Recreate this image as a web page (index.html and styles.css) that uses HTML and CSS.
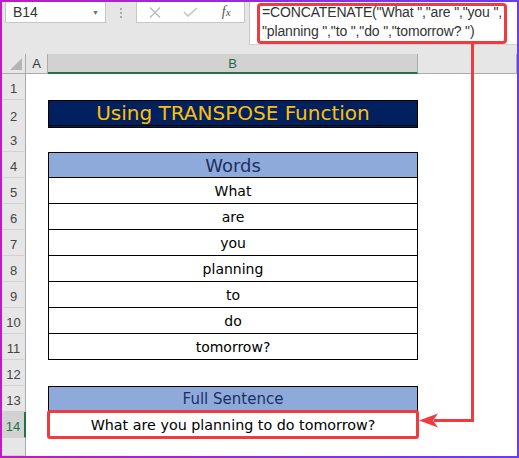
FILE: index.html
```html
<!DOCTYPE html>
<html lang="en">
<head>
    <meta charset="UTF-8">
    <meta name="viewport" content="width=device-width, initial-scale=1.0">
    <title>Using TRANSPOSE Function</title>
    <link rel="stylesheet" href="styles.css">
</head>
<body>
    <div class="frame">
        <!-- name box + formula bar -->
        <div class="toolbar">
            <div class="name-box">
                <span class="cell-ref">B14</span>
                <span class="drop">&#9660;</span>
            </div>
            <div class="grip"><i></i><i></i><i></i></div>
            <div class="fx-buttons">
                <span class="fx-btn">
                    <svg width="12" height="11" viewBox="0 0 12 11"><path d="M1 0.5 L11 10.5 M11 0.5 L1 10.5" stroke="#b9b9b9" stroke-width="1.3" fill="none"/></svg>
                </span>
                <span class="fx-btn">
                    <svg width="15" height="10" viewBox="0 0 15 10"><path d="M1 5 L5 9 L14 1" stroke="#c4c4c4" stroke-width="1.6" fill="none"/></svg>
                </span>
                <span class="fx-btn fx-label">f<sub>x</sub></span>
            </div>
            <div class="formula-bar">
                <div class="formula-box">
                    <div class="formula-text">=CONCATENATE("What ","are ","you ",<br>"planning ","to ","do ","tomorrow? ")</div>
                </div>
            </div>
        </div>

        <!-- sheet grid -->
        <div class="sheet">
            <div class="row col-heads">
                <div class="corner"></div>
                <div class="ch">A</div>
                <div class="ch selected">B</div>
                <div class="ch"></div>
            </div>
            <div class="row"><div class="rh">1</div><div></div><div class="c"></div><div></div></div>
            <div class="row"><div class="rh">2</div><div></div><div class="c title">Using TRANSPOSE Function</div><div></div></div>
            <div class="row"><div class="rh">3</div><div></div><div class="c"></div><div></div></div>
            <div class="row"><div class="rh">4</div><div></div><div class="c head">Words</div><div></div></div>
            <div class="row"><div class="rh">5</div><div></div><div class="c word">What</div><div></div></div>
            <div class="row"><div class="rh">6</div><div></div><div class="c word">are</div><div></div></div>
            <div class="row"><div class="rh">7</div><div></div><div class="c word">you</div><div></div></div>
            <div class="row"><div class="rh">8</div><div></div><div class="c word">planning</div><div></div></div>
            <div class="row"><div class="rh">9</div><div></div><div class="c word">to</div><div></div></div>
            <div class="row"><div class="rh">10</div><div></div><div class="c word">do</div><div></div></div>
            <div class="row"><div class="rh">11</div><div></div><div class="c word">tomorrow?</div><div></div></div>
            <div class="row"><div class="rh">12</div><div></div><div class="c"></div><div></div></div>
            <div class="row"><div class="rh">13</div><div></div><div class="c head sub">Full Sentence</div><div></div></div>
            <div class="row"><div class="rh selected">14</div><div></div><div class="c word sentence">What are you planning to do tomorrow?</div><div></div></div>
            <div class="row last"><div class="rh"></div><div></div><div class="c"></div><div></div></div>
        </div>

        <!-- callout from formula to result -->
        <svg class="connector" width="519" height="458" viewBox="0 0 519 458">
            <path d="M472.5 44 V420.5 H434" stroke="#ef3b40" stroke-width="3" fill="none"/>
            <polygon points="419,420.5 438,413.5 433,420.5 438,427.5" fill="#ef3b40"/>
        </svg>
    </div>
</body>
</html>
```

FILE: styles.css
```css
* {
    box-sizing: border-box;
}

body {
    margin: 0;
    font-family: "Liberation Sans", Arial, sans-serif;
}

.frame {
    position: relative;
    width: 519px;
    height: 458px;
    border: 2px solid transparent;
    background: linear-gradient(#fff, #fff) padding-box,
                linear-gradient(90deg, #c01ac8, #6a3cf3) border-box;
    overflow: hidden;
}

/* ---- toolbar ---- */
.toolbar {
    display: flex;
    align-items: flex-start;
    height: 52px;
    background: #e6e6e6;
}

.name-box {
    display: flex;
    align-items: center;
    justify-content: space-between;
    width: 101px;
    height: 21px;
    margin-left: 3px;
    padding: 0 6px 0 7px;
    background: #fff;
    border: 1px solid #c6c6c6;
    border-top: none;
}

.cell-ref {
    font-size: 14px;
    color: #333;
}

.drop {
    font-size: 7px;
    color: #6d6d6d;
}

.grip {
    display: flex;
    flex-direction: column;
    gap: 2px;
    margin-left: 14px;
    padding-top: 6px;
}

.grip i {
    display: block;
    width: 2px;
    height: 2px;
    background: #a8a8a8;
}

.fx-buttons {
    display: flex;
    width: 109px;
    height: 21px;
    margin-left: 14px;
    background: #fff;
    border: 1px solid #c6c6c6;
    border-top: none;
}

.fx-btn {
    flex: 1;
    display: flex;
    align-items: center;
    justify-content: center;
}

.fx-label {
    font-family: "Liberation Serif", "Times New Roman", serif;
    font-style: italic;
    font-size: 14px;
    color: #555;
}

.fx-label sub {
    font-size: 11px;
    vertical-align: -1px;
}

.formula-bar {
    flex: 1;
    height: 43px;
    margin-left: 4px;
    padding: 1px 10px 0 7px;
    background: #fff;
    border-left: 1px solid #c6c6c6;
    border-bottom: 1px solid #d0d0d0;
}

.formula-box {
    height: 41px;
    padding-left: 2px;
    border: 3px solid #ef3b40;
    border-radius: 4px;
}

.formula-text {
    margin-top: -3px;
    font-size: 14px;
    line-height: 19px;
    letter-spacing: -0.15px;
    color: #333;
    white-space: nowrap;
}

/* ---- sheet ---- */
.row {
    display: grid;
    grid-template-columns: 24px 22px 370px 1fr;
    height: 26px;
}

.row.last {
    height: 18px;
}

.col-heads {
    height: 20px;
    background: #e6e6e6;
}

.corner {
    display: flex;
    align-items: flex-end;
    justify-content: flex-end;
    padding: 0 3px 3px 0;
    border-right: 1px solid #ababab;
    border-bottom: 1px solid #ababab;
}

.corner::before {
    content: '';
    width: 12px;
    height: 12px;
    background: #b5b5b5;
    clip-path: polygon(100% 0, 100% 100%, 0 100%);
}

.ch {
    display: flex;
    align-items: center;
    justify-content: center;
    font-size: 13px;
    color: #333;
    border-right: 1px solid #ababab;
    border-bottom: 1px solid #ababab;
}

.ch.selected {
    background: #d2d2d2;
    color: #1e6b41;
    border-bottom: 2px solid #217346;
}

.rh {
    display: flex;
    align-items: flex-end;
    justify-content: center;
    padding-bottom: 3px;
    font-size: 13px;
    color: #444;
    background: #e6e6e6;
    border-right: 1px solid #ababab;
    border-bottom: 1px solid #d2d2d2;
}

.rh.selected {
    background: #d2d2d2;
    color: #217346;
    border-right: 2px solid #217346;
}

.c {
    display: flex;
    align-items: center;
    justify-content: center;
    font-family: "Comic Sans MS", "DejaVu Sans", sans-serif;
    font-size: 14px;
    color: #000;
}

.c.title {
    font-size: 20px;
    color: #ffc000;
    background: #002060;
    border: 1px solid #000;
    border-bottom: 3px double #000;
}

.c.head {
    font-size: 18px;
    color: #1c3062;
    background: #8eaadb;
    border: 1px solid #000;
}

.c.head.sub {
    font-size: 15px;
}

.c.word {
    border: 1px solid #000;
    border-top: none;
}

.c.sentence {
    position: relative;
    font-size: 14.3px;
}

.c.sentence::after {
    content: '';
    position: absolute;
    inset: -2px;
    border: 3px solid #ef3b40;
    border-radius: 3px;
}

.connector {
    position: absolute;
    top: -2px;
    left: -2px;
    pointer-events: none;
}
```
